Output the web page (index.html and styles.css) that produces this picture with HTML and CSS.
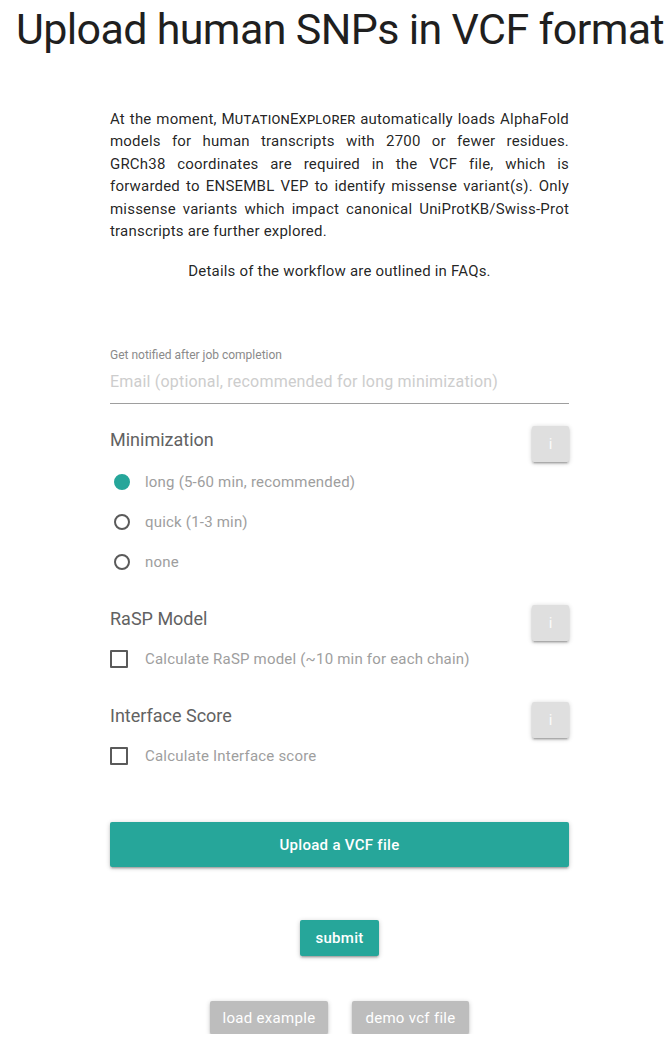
FILE: index.html
```html
<!DOCTYPE html>
<html lang="en">
<head>
<meta charset="utf-8">
<title>Upload human SNPs in VCF format</title>
<link rel="stylesheet" href="styles.css">
</head>
<body>
<h1 class="title">Upload human SNPs in VCF format</h1>
<main class="container">
  <p class="intro">At the moment, <span class="sc">MutationExplorer</span> automatically loads AlphaFold models for human transcripts with 2700 or fewer residues. GRCh38 coordinates are required in the VCF file, which is forwarded to ENSEMBL VEP to identify missense variant(s). Only missense variants which impact canonical UniProtKB/Swiss-Prot transcripts are further explored.</p>
  <p class="details">Details of the workflow are outlined in FAQs.</p>

  <div class="field">
    <label class="field-label" for="email">Get notified after job completion</label>
    <input class="field-input" id="email" type="email" placeholder="Email (optional, recommended for long minimization)">
  </div>

  <div class="section-head head-min">
    <h2 class="section-title">Minimization</h2>
    <button class="info-btn" type="button">i</button>
  </div>
  <div class="radio-group">
    <label class="radio-row"><span class="radio checked"></span><span class="opt-text">long (5-60 min, recommended)</span></label>
    <label class="radio-row"><span class="radio"></span><span class="opt-text">quick (1-3 min)</span></label>
    <label class="radio-row"><span class="radio"></span><span class="opt-text">none</span></label>
  </div>

  <div class="section-head head-rasp">
    <h2 class="section-title">RaSP Model</h2>
    <button class="info-btn" type="button">i</button>
  </div>
  <label class="check-row"><span class="checkbox"></span><span class="opt-text">Calculate RaSP model (~10 min for each chain)</span></label>

  <div class="section-head head-iface">
    <h2 class="section-title">Interface Score</h2>
    <button class="info-btn" type="button">i</button>
  </div>
  <label class="check-row"><span class="checkbox"></span><span class="opt-text">Calculate Interface score</span></label>

  <button class="btn btn-upload" type="button">Upload a VCF file</button>

  <div class="submit-row">
    <button class="btn btn-submit" type="button">submit</button>
  </div>

  <div class="extra-row">
    <button class="btn btn-gray btn-example" type="button">load example</button>
    <button class="btn btn-gray btn-demo" type="button">demo vcf file</button>
  </div>
</main>
</body>
</html>
```

FILE: styles.css
```css
* { box-sizing: border-box; }

body {
  margin: 0;
  font-family: Roboto, "Liberation Sans", sans-serif;
  color: rgba(0, 0, 0, 0.87);
  background: #fff;
  overflow: hidden;
}

.title {
  margin: 0 0 0 16px;
  padding-top: 3px;
  font-size: 43px;
  font-weight: 400;
  line-height: 52px;
  letter-spacing: -0.65px;
  white-space: nowrap;
  color: #1f1f1f;
}

.container {
  width: 459px;
  margin-left: 110px;
  display: flex;
  flex-direction: column;
}

.intro {
  margin: 53px 0 0 0;
  font-size: 15px;
  line-height: 22.4px;
  letter-spacing: 0.2px;
  text-align: justify;
}

.sc { font-variant: small-caps; }

.details {
  margin: 18px 0 0 0;
  font-size: 15px;
  line-height: 22px;
  letter-spacing: 0.2px;
  text-align: center;
}

.field {
  margin-top: 65px;
  display: flex;
  flex-direction: column;
}

.field-label {
  font-size: 12px;
  line-height: 16px;
  color: #8a8a8a;
}

.field-input {
  margin-top: 0;
  height: 41px;
  border: none;
  border-bottom: 1px solid #9e9e9e;
  padding: 0 0 4px 0;
  font-family: inherit;
  font-size: 16px;
  letter-spacing: 0.2px;
  outline: none;
  background: transparent;
}

.field-input::placeholder { color: #cdcdcd; }

.section-head {
  display: flex;
  justify-content: space-between;
  align-items: flex-start;
  height: 36px;
}

.head-min { margin-top: 22px; }
.head-rasp { margin-top: 23px; }
.head-iface { margin-top: 25px; }

.section-title {
  margin: 0;
  font-size: 18px;
  font-weight: 400;
  line-height: 27px;
  color: #626262;
}

.info-btn {
  width: 37px;
  height: 36px;
  border: none;
  border-radius: 2px;
  background: #dfdfdf;
  color: #fbfbfb;
  font-family: inherit;
  font-size: 15px;
  padding: 0;
  box-shadow: 0 2px 2px 0 rgba(0,0,0,0.14), 0 3px 1px -2px rgba(0,0,0,0.12), 0 1px 5px 0 rgba(0,0,0,0.2);
}

.radio-group {
  display: flex;
  flex-direction: column;
}

.radio-row, .check-row {
  display: flex;
  align-items: center;
  font-size: 15px;
  letter-spacing: 0.2px;
  color: #9e9e9e;
}

.radio-row { height: 40px; }
.check-row { height: 36px; }

.radio {
  width: 16px;
  height: 16px;
  margin: 0 15px 0 4px;
  border-radius: 50%;
  border: 2px solid #5a5a5a;
  flex: none;
}

.radio.checked {
  border-color: #26a69a;
  background: #26a69a;
}

.checkbox {
  width: 18px;
  height: 18px;
  margin-right: 17px;
  border: 2px solid #5a5a5a;
  border-radius: 1px;
  flex: none;
}

.btn {
  border: none;
  border-radius: 2px;
  font-family: inherit;
  font-size: 15px;
  font-weight: 500;
  color: #fff;
  letter-spacing: 0.3px;
  padding: 0;
  box-shadow: 0 2px 2px 0 rgba(0,0,0,0.14), 0 3px 1px -2px rgba(0,0,0,0.12), 0 1px 5px 0 rgba(0,0,0,0.2);
}

.btn-upload {
  margin-top: 48px;
  height: 45px;
  width: 100%;
  background: #26a69a;
}

.submit-row {
  margin-top: 53px;
  display: flex;
  justify-content: center;
}

.btn-submit {
  width: 79px;
  height: 36px;
  background: #26a69a;
}

.extra-row {
  margin-top: 45px;
  display: flex;
  justify-content: center;
  gap: 24px;
}

.btn-gray {
  height: 33px;
  background: #bdbdbd;
  font-weight: 400;
}

.btn-example { width: 118px; }
.btn-demo { width: 117px; }
```
